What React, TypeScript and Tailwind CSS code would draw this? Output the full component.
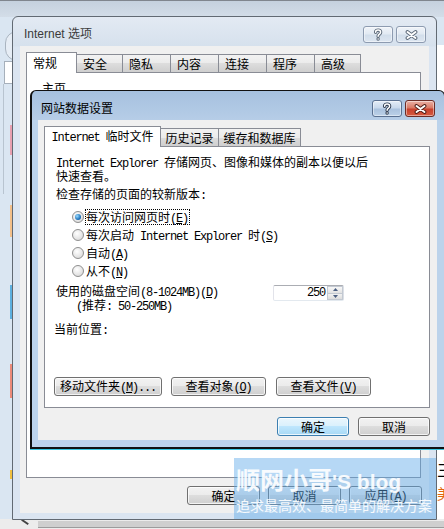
import React from "react";

const MONO = "font-['Liberation_Mono',monospace] text-[12px] tracking-[-1.2px]";

function Mx({ t }: { t: string }) {
  const segs: { s: string; m: boolean; u: boolean }[] = [];
  for (let i = 0; i < t.length; i++) {
    let c = t[i];
    let u = false;
    if (c === "&" && i + 1 < t.length) {
      i++;
      c = t[i];
      u = true;
    }
    const m = c.charCodeAt(0) < 128;
    const last = segs[segs.length - 1];
    if (last && last.m === m && !u && !last.u) last.s += c;
    else segs.push({ s: c, m, u });
  }
  return (
    <span className="whitespace-pre">
      {segs.map((g, i) => (
        <span key={i} className={(g.m ? MONO : "") + (g.u ? " underline underline-offset-[1px]" : "")}>
          {g.s}
        </span>
      ))}
    </span>
  );
}

function Btn({ w, t, def }: { w: string; t: string; def?: boolean }) {
  return (
    <div
      className={`${w} h-[19px] shrink-0 rounded-[3px] border flex items-center justify-center text-[12px] leading-[12px] whitespace-nowrap shadow-[inset_0_0_0_1px_rgba(255,255,255,0.75)] ${
        def
          ? "border-[#3c7fb1] bg-[linear-gradient(#eaf6fd_0%,#d9f0fc_50%,#bee6fd_50%,#a7d9f5_100%)]"
          : "border-[#707070] bg-[linear-gradient(#f2f2f2_0%,#ebebeb_50%,#dddddd_50%,#cfcfcf_100%)]"
      }`}
    >
      <Mx t={t} />
    </div>
  );
}

function Cap({ kind, active }: { kind: "help" | "close"; active?: boolean }) {
  const cls =
    kind === "close" && active
      ? "border-[#6b2c26] bg-[linear-gradient(#eab1a6_0%,#d97a66_45%,#c8412d_55%,#d65a40_100%)]"
      : active
      ? "border-[#5a7090] bg-[linear-gradient(#e4edf7_0%,#c9d9ec_45%,#aac2de_55%,#bcd1e8_100%)]"
      : "border-[#8d9bb0] bg-[linear-gradient(#f0f4f9_0%,#e2eaf3_45%,#d2deeb_55%,#dde6f1_100%)]";
  const dark = kind === "close" && active ? "#4a1a14" : active ? "#2d3a4e" : "#5b6878";
  return (
    <div className={`w-[30px] h-[17px] rounded-[3px] border ${cls} flex items-center justify-center shadow-[inset_0_0_0_1px_rgba(255,255,255,0.45)]`}>
      {kind === "help" ? (
        <svg width="10" height="13" viewBox="0 0 10 13">
          <path d="M2.6 4.2 C2.6 1.4 7.6 1.4 7.6 4.2 C7.6 6.1 5.1 6.2 5.1 8.3" fill="none" stroke={dark} strokeWidth="3.4" strokeLinecap="round" />
          <line x1="5.1" y1="11" x2="5.1" y2="11.01" stroke={dark} strokeWidth="3.4" strokeLinecap="round" />
          <path d="M2.6 4.2 C2.6 1.4 7.6 1.4 7.6 4.2 C7.6 6.1 5.1 6.2 5.1 8.3" fill="none" stroke="#fff" strokeWidth="1.5" strokeLinecap="round" />
          <line x1="5.1" y1="11" x2="5.1" y2="11.01" stroke="#fff" strokeWidth="1.5" strokeLinecap="round" />
        </svg>
      ) : (
        <svg width="13" height="10" viewBox="0 0 13 10">
          <path d="M2.5 2 L10.5 8 M10.5 2 L2.5 8" stroke={dark} strokeWidth="3.8" strokeLinecap="round" />
          <path d="M2.5 2 L10.5 8 M10.5 2 L2.5 8" stroke="#fff" strokeWidth="2" strokeLinecap="round" />
        </svg>
      )}
    </div>
  );
}

function Radio({ on, label, focus }: { on?: boolean; label: string; focus?: boolean }) {
  return (
    <div className="h-[18px] flex items-center pl-[16px]">
      <div className="w-[12px] h-[12px] rounded-full border border-[#8f8f8f] bg-[radial-gradient(circle_at_40%_35%,#ffffff,#d2d2d2)] flex items-center justify-center">
        {on && <div className="w-[6px] h-[6px] rounded-full bg-[radial-gradient(circle_at_35%_35%,#9bdcff,#1f74bc_60%,#0b4a86)]" />}
      </div>
      <span
        className={`ml-px h-[16px] pr-px block leading-[14px] whitespace-nowrap border ${
          focus ? "border-dotted border-black" : "border-transparent"
        }`}
      >
        <Mx t={label} />
      </span>
    </div>
  );
}

function SpinBox() {
  return (
    <div className="w-[71px] h-[16px] flex border border-[#abadb3] border-r-[#dbdfe6] border-b-[#e3e9ef] border-l-[#e2e3ea] bg-white rounded-[2px]">
      <div className="flex-1 flex items-center justify-end pr-[2px] leading-[12px]">
        <span className={MONO}>250</span>
      </div>
      <div className="w-[16px] flex flex-col">
        <div className="flex-1 border border-[#c3c9d2] bg-[linear-gradient(#f8f8f8,#e2e2e2)] flex items-center justify-center">
          <svg width="5" height="3" viewBox="0 0 5 3">
            <path d="M0 3 L2.5 0 L5 3 Z" fill="#4b5f82" />
          </svg>
        </div>
        <div className="flex-1 border border-t-0 border-[#c3c9d2] bg-[linear-gradient(#f2f2f2,#dcdcdc)] flex items-center justify-center">
          <svg width="5" height="3" viewBox="0 0 5 3">
            <path d="M0 0 L2.5 3 L5 0 Z" fill="#4b5f82" />
          </svg>
        </div>
      </div>
    </div>
  );
}

export default function App() {
  const outerTabs = [
    { t: "安全", w: "w-[47px]" },
    { t: "隐私", w: "w-[49px]" },
    { t: "内容", w: "w-[49px]" },
    { t: "连接", w: "w-[49px]" },
    { t: "程序", w: "w-[49px]" },
    { t: "高级", w: "w-[47px]" },
  ];
  return (
    <div className="relative w-[444px] h-[529px] overflow-hidden bg-[#dae6f2] font-['Noto_Sans_CJK_SC',sans-serif] text-[12px] text-black">
      {/* desktop / browser behind */}
      <div className="absolute left-0 top-0 w-[444px] h-[17px] border-t border-[#80868e] bg-[linear-gradient(#c5d1de,#d3dde8)]" />
      <div className="absolute left-[5px] top-[31px] w-[24px] h-[30px] rounded-full border border-[#a9b4c0] bg-[#e6edf5]" />
      <div className="absolute left-[4px] top-[61px] w-[12px] h-[23px] border border-[#a6b0bb] bg-white" />
      <div className="absolute left-[3px] top-[84px] w-px h-[110px] bg-[#b8c4d0]" />
      <div className="absolute left-[10px] top-[125px] w-[2px] h-[30px] bg-[#e8a0b0]" />
      <div className="absolute left-[10px] top-[205px] w-[2px] h-[32px] bg-[#f3c08a]" />
      <div className="absolute left-[10px] top-[285px] w-[2px] h-[34px] bg-[#5cb0e0]" />
      <div className="absolute left-[10px] top-[364px] w-[2px] h-[34px] bg-[#ec8a7a]" />
      <div className="absolute left-[10px] top-[470px] w-[2px] h-[9px] bg-[#f0c040]" />
      <div className="absolute left-[437px] top-[45px] w-[7px] h-[474px] bg-white" />
      <div className="absolute left-[437px] top-[459px] text-[18px] leading-[18px]">主</div>
      <div className="absolute left-[437px] top-[486px] text-[14px] leading-[14px] text-[#e2650e]">美</div>
      <div className="absolute left-0 top-[519px] w-[444px] h-[10px] bg-[#ececec]" />
      <div className="absolute left-[38px] top-[521px] w-[406px] h-[7px] bg-[#cfcfcf] border-b border-[#9c9c9c]" />
      <div className="absolute left-[21px] top-[521px] w-[8px] h-[2px] rotate-[35deg] bg-[#444]" />

      {/* Internet 选项 window */}
      <div className="absolute left-[12px] top-[16px] w-[425px] h-[504px] rounded-t-[6px] border border-[#626a73] bg-[linear-gradient(#e3eaf3_0px,#d6e1ed_29px,#dbe5f1_30px,#dbe5f1_100%)] px-[7px] pb-[6px] flex flex-col">
        <div className="h-[29px] flex items-start shrink-0">
          <span className="ml-[4px] mt-[10px] font-['Liberation_Sans','Noto_Sans_CJK_SC',sans-serif] text-[12px] leading-[14px] text-[#3b3b3b] whitespace-nowrap">
            Internet 选项
          </span>
          <div className="ml-auto mr-[3px] mt-[9px] flex gap-[3px]">
            <Cap kind="help" />
            <Cap kind="close" />
          </div>
        </div>
        <div className="flex-1 bg-[#f0f0f0] flex flex-col pt-[6px] pl-[6px]">
          <div className="h-[20px] flex items-end">
            <div className="relative z-10 w-[51px] h-[21px] -mb-px border border-b-0 border-[#898c95] bg-white flex items-center pl-[6px] leading-[12px]">
              常规
            </div>
            {outerTabs.map((tb) => (
              <div
                key={tb.t}
                className={`${tb.w} h-[18px] -ml-px border border-b-0 border-[#898c95] bg-[linear-gradient(#f2f2f2_0%,#ebebeb_50%,#dddddd_50%,#cfcfcf_100%)] flex items-center pl-[6px] leading-[12px]`}
              >
                {tb.t}
              </div>
            ))}
          </div>
          <div className="w-[395px] h-[406px] border border-[#898c95] bg-white pl-[15px] pt-[9px] leading-[12px]">主页</div>
          <div className="mt-[8px] flex">
            <div className="ml-[161px]">
              <Btn w="w-[73px]" t="确定" />
            </div>
            <div className="ml-[8px]">
              <Btn w="w-[73px]" t="取消" />
            </div>
            <div className="ml-[8px]">
              <Btn w="w-[73px]" t="应用(&A)" />
            </div>
          </div>
        </div>
      </div>

      {/* 网站数据设置 dialog */}
      <div className="absolute left-[30px] top-[90px] w-[415px] h-[359px] rounded-t-[6px] border-t border-r border-l-2 border-b-2 border-[#111] bg-[linear-gradient(#a6c1df_0px,#b6cde7_29px,#bcd3eb_29px,#bcd3eb_100%)] pl-[6px] pr-[7px] pb-[7px] flex flex-col">
        <div className="h-[29px] flex items-start shrink-0">
          <span className="ml-[3px] mt-[10px] leading-[14px] text-[12px] whitespace-nowrap">网站数据设置</span>
          <div className="ml-auto mr-[2px] mt-[9px] flex gap-[3px]">
            <Cap kind="help" active />
            <Cap kind="close" active />
          </div>
        </div>
        <div className="flex-1 bg-[#f0f0f0] flex flex-col pt-[6px] pl-[6px] pr-[7px]">
          <div className="h-[20px] flex items-end">
            <div className="relative z-10 w-[117px] h-[21px] -mb-px border border-b-0 border-[#898c95] bg-white flex items-center justify-center leading-[12px] whitespace-nowrap">
              <Mx t="Internet 临时文件" />
            </div>
            <div className="w-[59px] h-[18px] -ml-px border border-b-0 border-[#898c95] bg-[linear-gradient(#f2f2f2_0%,#ebebeb_50%,#dddddd_50%,#cfcfcf_100%)] flex items-center justify-center leading-[12px]">
              历史记录
            </div>
            <div className="w-[83px] h-[18px] -ml-px border border-b-0 border-[#898c95] bg-[linear-gradient(#f2f2f2_0%,#ebebeb_50%,#dddddd_50%,#cfcfcf_100%)] flex items-center justify-center leading-[12px]">
              缓存和数据库
            </div>
          </div>
          <div className="w-[386px] h-[262px] border border-[#898c95] bg-white flex flex-col pl-[11px] pt-[9px] pb-[11px]">
            <div className="leading-[12px] whitespace-nowrap">
              <Mx t="Internet Explorer 存储网页、图像和媒体的副本以便以后" />
              <br />
              快速查看。
            </div>
            <div className="mt-[6px] leading-[12px] whitespace-nowrap">
              <Mx t="检查存储的页面的较新版本:" />
            </div>
            <div className="mt-[6px] flex flex-col">
              <Radio on focus label="每次访问网页时(&E)" />
              <Radio label="每次启动 Internet Explorer 时(&S)" />
              <Radio label="自动(&A)" />
              <Radio label="从不(&N)" />
            </div>
            <div className="mt-[5px] flex items-start">
              <div className="w-[217px] leading-[12px] whitespace-nowrap">
                <div>
                  <Mx t="使用的磁盘空间(8-1024MB)(&D)" />
                </div>
                <div className="pl-[20px]">
                  <Mx t="(推荐: 50-250MB)" />
                </div>
              </div>
              <SpinBox />
            </div>
            <div className="mt-[10px] -ml-[2px] leading-[12px]">
              <Mx t="当前位置:" />
            </div>
            <div className="mt-auto -ml-[2px] flex">
              <Btn w="w-[108px]" t="移动文件夹(&M)..." />
              <div className="ml-[9px]">
                <Btn w="w-[95px]" t="查看对象(&O)" />
              </div>
              <div className="ml-[10px]">
                <Btn w="w-[95px]" t="查看文件(&V)" />
              </div>
            </div>
          </div>
          <div className="mt-[9px] flex justify-end">
            <Btn w="w-[72px]" t="确定" def />
            <div className="ml-[9px]">
              <Btn w="w-[72px]" t="取消" />
            </div>
          </div>
        </div>
      </div>
      <div className="absolute left-[30px] top-[449px] w-[414px] h-px bg-[#38c6e0]" />

      {/* watermark */}
      <div className="absolute z-50 left-[234px] top-[458px] w-[202px] h-[61px] bg-[#5ea8e8]/45 pl-[2px] flex flex-col">
        <div className="mt-[7px] h-[28px] leading-[28px] whitespace-nowrap text-white/90 font-bold">
          <span className="text-[24px]">顺网小哥</span>
          <span className="font-['Liberation_Sans',sans-serif] text-[21px]">'S blog</span>
        </div>
        <div className="mt-[4px] text-[14px] leading-[16px] whitespace-nowrap text-white/90">追求最高效、最简单的解决方案</div>
      </div>
    </div>
  );
}
